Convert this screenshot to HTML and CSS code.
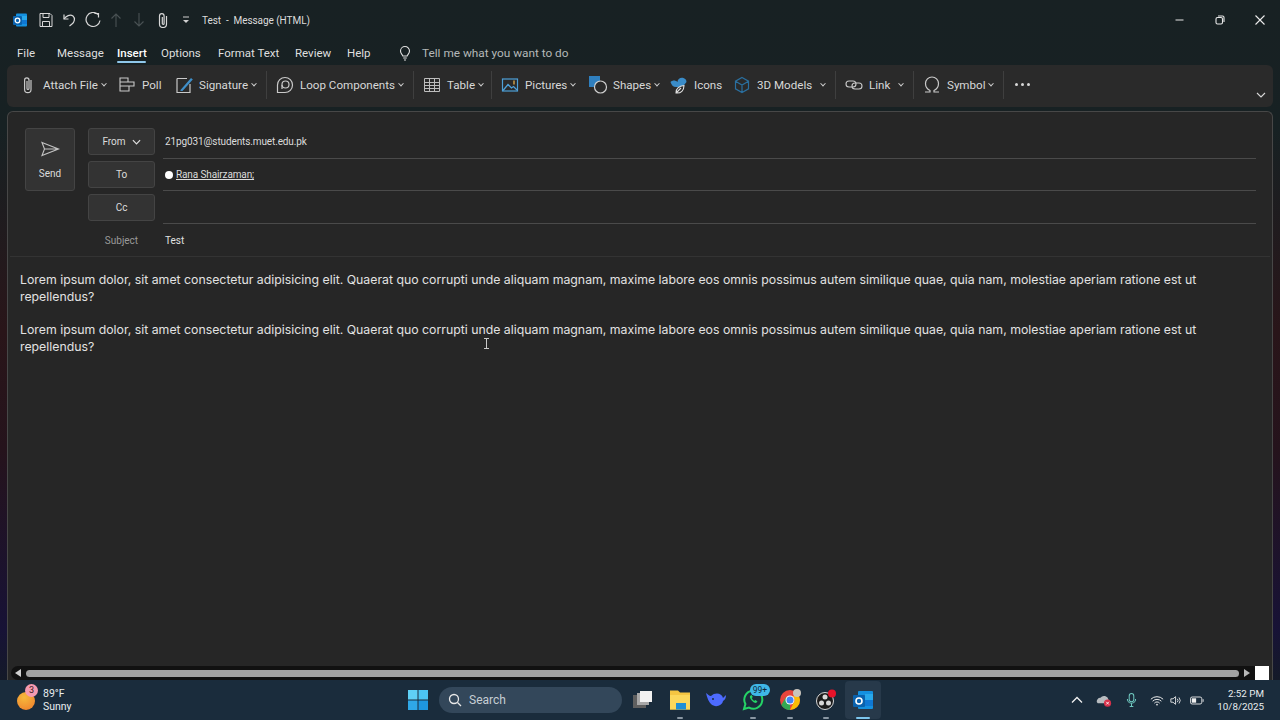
FILE: index.html
```html
<!DOCTYPE html>
<html lang="en">
<head>
<meta charset="utf-8">
<title>Test - Message (HTML)</title>
<link rel="stylesheet" href="styles.css">
</head>
<body>
<div class="window">
  <header class="titlebar">
    <svg class="qa outlook" viewBox="0 0 16 16"><rect x="4" y="1.500" width="11" height="13" rx="1" fill="#1490df"/><rect x="9" y="4" width="6" height="4" fill="#28a8ea"/><rect x="9" y="8" width="6" height="4" fill="#0f78d4"/><rect x="1" y="4" width="9" height="9" rx="1" fill="#0a62ad"/><circle cx="5.500" cy="8.500" r="2.300" fill="none" stroke="#fff" stroke-width="1.300"/></svg>
    <svg class="qa save" viewBox="0 0 16 16" fill="none" stroke="#d8d8d8"><path d="M2 1.500h10l2 2v11H2z"/><path d="M5 1.500v4h6v-4M4.500 14.500v-5h7v5"/></svg>
    <svg class="qa undo" viewBox="0 0 16 16" fill="none" stroke="#d8d8d8" stroke-width="1.200"><path d="M3 2.500v4.500h4.500"/><path d="M3 7c2-3 6-5 9-3 2.500 2.300 1.500 6-1 8l-2.500 2"/></svg>
    <svg class="qa redo" viewBox="0 0 16 16" fill="none" stroke="#d8d8d8" stroke-width="1.200"><path d="M9.500 1.500h4v4"/><path d="M13 2.500A7 7 0 1 0 15 8.500"/></svg>
    <svg class="qa up" viewBox="0 0 16 16" fill="none" stroke="#4a5254" stroke-width="1.100"><path d="M8 15V2M3.500 6.500 8 2l4.500 4.500"/></svg>
    <svg class="qa down" viewBox="0 0 16 16" fill="none" stroke="#4a5254" stroke-width="1.100"><path d="M8 1v13M3.500 9.500 8 14l4.500-4.500"/></svg>
    <svg class="qa clip" viewBox="0 0 16 16" fill="none" stroke="#d8d8d8" stroke-width="1.200"><path d="M11.500 4v8a3.500 3.500 0 0 1-7 0V4a2.300 2.300 0 0 1 4.600 0v7.500a.9.9 0 0 1-1.800 0V5"/></svg>
    <svg class="qa more" viewBox="0 0 16 16" fill="#d0d0d0"><rect x="5" y="4.500" width="6" height="1"/><path d="M5 8h6l-3 3z"/></svg>
    <span class="doc-title">Test&nbsp; -&nbsp; Message (HTML)</span>
    <div class="winctl">
      <svg viewBox="0 0 12 12" stroke="#e8e8e8" fill="none"><path d="M1.500 6h8"/></svg>
      <svg viewBox="0 0 12 12" stroke="#e8e8e8" fill="none" stroke-width="1.100"><rect x="2" y="3.500" width="6.500" height="6.500" rx="1.500"/><path d="M4 2h4.500A1.500 1.500 0 0 1 10 3.500V8"/></svg>
      <svg viewBox="0 0 12 12" stroke="#ececec" fill="none" stroke-width="1.100"><path d="m1.500 1.500 9 9m0-9-9 9"/></svg>
    </div>
  </header>

  <nav class="tabs">
    <span class="tab t-file">File</span>
    <span class="tab t-msg">Message</span>
    <span class="tab t-ins active">Insert</span>
    <span class="tab t-opt">Options</span>
    <span class="tab t-fmt">Format Text</span>
    <span class="tab t-rev">Review</span>
    <span class="tab t-help">Help</span>
    <svg class="bulb" viewBox="0 0 16 16" fill="none" stroke="#e0e0e0" stroke-width="1.100"><path d="M5.800 11C5.500 9.500 3.500 8.500 3.500 6a4.500 4.500 0 0 1 9 0c0 2.500-2 3.500-2.300 5z"/><path d="M6.200 13h3.600M7 15h2"/></svg>
    <span class="tell">Tell me what you want to do</span>
  </nav>

  <section class="ribbon">
    <div class="rb w-attach"><svg class="ri" viewBox="0 0 20 20" fill="none" stroke="#c9c9c9" stroke-width="1.200"><path d="M13 5v9.500a3.200 3.200 0 0 1-6.400 0V5a2.200 2.200 0 0 1 4.400 0v8.500a1 1 0 0 1-2 0V6"/></svg><span>Attach File</span><i class="caret"></i></div>
    <div class="rb w-poll"><svg class="ri" viewBox="0 0 20 20" fill="none" stroke="#c9c9c9" stroke-width="1.100"><path d="M3 3h8v4H3zM3 7h14v4H3zM3 11h9v5H3z"/></svg><span>Poll</span></div>
    <div class="rb w-sign"><svg class="ri" viewBox="0 0 20 20" fill="none"><path d="M3 3.500h10M3 3.500v14h13V9" stroke="#c9c9c9" stroke-width="1.200"/><path d="M6.500 15 17 3l1.800 1.500L8.500 16H6.500z" fill="#3f8fc9"/></svg><span>Signature</span><i class="caret"></i></div>
    <b class="sep"></b>
    <div class="rb w-loop"><svg class="ri" viewBox="0 0 20 20" fill="none" stroke="#c9c9c9" stroke-width="1.200"><path d="M2.500 10a7.500 7.500 0 1 1 7.500 7.500H2.500z"/><circle cx="10.500" cy="9.500" r="3.500"/><path d="M7 10v4"/></svg><span>Loop Components</span><i class="caret"></i></div>
    <b class="sep"></b>
    <div class="rb w-table"><svg class="ri" viewBox="0 0 20 20" fill="none" stroke="#bdbdbd" stroke-width="1"><path d="M2.500 3.500h15v13h-15zM2.500 7.500h15M2.500 10.500h15M2.500 13.500h15M7.500 3.500v13M12.500 3.500v13"/></svg><span>Table</span><i class="caret"></i></div>
    <b class="sep"></b>
    <div class="rb w-pic"><svg class="ri" viewBox="0 0 20 20" fill="none"><rect x="2.500" y="4" width="15" height="12" stroke="#4ea0d8" stroke-width="1.200"/><path d="M3 15.500 8 9.500l3.500 3.500 2-1.500 3.500 3.500" stroke="#4ea0d8" stroke-width="1.300"/><path d="M14 5.500v4" stroke="#d6a64a" stroke-width="1.400"/></svg><span>Pictures</span><i class="caret"></i></div>
    <div class="rb w-shape"><svg class="ri" viewBox="0 0 20 20" fill="none"><rect x="1" y="1" width="11" height="11" fill="#2f7fbe"/><circle cx="12.500" cy="12" r="6" fill="#2a2a2a" stroke="#d0d0d0" stroke-width="1.200"/></svg><span>Shapes</span><i class="caret"></i></div>
    <div class="rb w-icons"><svg class="ri" viewBox="0 0 20 20" fill="none"><path d="M1.500 7c2-2 5-2 7 0 0-3 3-5 6-4 2 .7 3 2 3 4l-4 5H7C4 12 2.500 10 1.500 7z" fill="#3a8cc8"/><path d="M7 18c-.5-4 3-7 8-7.500 0 5-3 8-8 7.500zm0 0 5-5" stroke="#e0e0e0" stroke-width="1.100" fill="#2a2a2a"/></svg><span>Icons</span></div>
    <div class="rb w-3d"><svg class="ri" viewBox="0 0 20 20" fill="none" stroke="#2a6f9f" stroke-width="1.200"><path d="m10 2.500 6.500 3.700v7.600L10 17.500l-6.500-3.700V6.200zM3.500 6.200 10 10l6.500-3.800M10 10v7.500"/></svg><span>3D Models</span><i class="caret"></i></div>
    <b class="sep"></b>
    <div class="rb w-link"><svg class="ri" viewBox="0 0 20 20" fill="none" stroke="#c9c9c9" stroke-width="1.100"><rect x="2" y="6" width="10" height="6" rx="3"/><rect x="8" y="8" width="10" height="6" rx="3"/></svg><span>Link</span><i class="caret"></i></div>
    <b class="sep"></b>
    <div class="rb w-sym"><svg class="ri" viewBox="0 0 20 20" fill="none" stroke="#c9c9c9" stroke-width="1.200"><path d="M3 17h5v-1.500C5 14 3.500 11.500 3.500 8.500a6.500 6.500 0 0 1 13 0c0 3-1.500 5.500-4.500 7V17h5"/></svg><span>Symbol</span><i class="caret"></i></div>
    <b class="sep"></b>
    <div class="dots"><i></i><i></i><i></i></div>
    <svg class="collapse" viewBox="0 0 10 6" fill="none" stroke="#d8d8d8" stroke-width="1.100"><path d="m1 1 4 4 4-4"/></svg>
  </section>

  <main class="compose">
    <div class="head">
      <div class="send"><svg viewBox="0 0 20 16" fill="none" stroke="#c4c4c4" stroke-width="1.100"><path d="M2 1.500 18.500 8 2 14.500 4.500 8zM4.500 8h14"/></svg><span>Send</span></div>
      <div class="fields">
        <div class="row r-from"><div class="btn">From <svg class="from-car" viewBox="0 0 10 6" fill="none" stroke="#e0e0e0" stroke-width="1.300"><path d="m1 1 4 4 4-4"/></svg></div><div class="val">21pg031@students.muet.edu.pk</div></div>
        <div class="row r-to"><div class="btn">To</div><div class="val"><i class="dot"></i><u>Rana Shairzaman;</u></div></div>
        <div class="row r-cc"><div class="btn">Cc</div><div class="val"></div></div>
        <div class="row r-sub"><div class="lbl">Subject</div><div class="subject">Test</div></div>
      </div>
    </div>
    <article class="body">
      <p>Lorem ipsum dolor, sit amet consectetur adipisicing elit. Quaerat quo corrupti unde aliquam magnam, maxime labore eos omnis possimus autem similique quae, quia nam, molestiae aperiam ratione est ut repellendus?</p>
      <p>Lorem ipsum dolor, sit amet consectetur adipisicing elit. Quaerat quo corrupti unde aliquam magnam, maxime labore eos omnis possimus autem similique quae, quia nam, molestiae aperiam ratione est ut repellendus?</p>
    </article>
    <svg class="ibeam" viewBox="0 0 7 11" fill="none" stroke="#c8c8c8"><path d="M1 .5h5M3.500.5v10M1 10.500h5"/></svg>
    <div class="hscroll">
      <i class="arrow left"></i>
      <div class="thumb"></div>
      <i class="arrow right"></i>
      <div class="corner"></div>
    </div>
  </main>
</div>

<footer class="taskbar">
  <div class="weather">
    <div class="sun"><span class="badge">3</span></div>
    <div class="wtext"><span>89°F</span><span>Sunny</span></div>
  </div>
  <svg class="start" viewBox="0 0 20 20"><rect width="9.500" height="9.500" fill="#5fd0f5"/><rect x="10.500" width="9.500" height="9.500" fill="#4cc4f2"/><rect y="10.500" width="9.500" height="9.500" fill="#2fa8e8"/><rect x="10.500" y="10.500" width="9.500" height="9.500" fill="#1e96e0"/></svg>
  <div class="search"><svg viewBox="0 0 14 14" fill="none" stroke="#e8e8e8" stroke-width="1.300"><circle cx="6" cy="6" r="4.500"/><path d="m9.500 9.500 3.500 3.500"/></svg><span>Search</span></div>
  <div class="apps">
    <div class="app"><svg viewBox="0 0 22 22"><rect x="1" y="6" width="13" height="13" fill="#5f5f5f"/><rect x="5" y="4" width="12" height="12" fill="#a8a8a8"/><rect x="8" y="2" width="12" height="11" fill="#f2f2f2"/></svg></div>
    <div class="app on"><svg viewBox="0 0 22 22"><path d="M1 1.500h8l2 2h10v17H1z" fill="#f4c542"/><rect x="1" y="6" width="20" height="14.500" fill="#fbd75b"/><rect x="7" y="14" width="10" height="6.500" fill="#1f8fd6"/></svg></div>
    <div class="app"><svg viewBox="0 0 22 22"><path d="M1 4c2 1 3 3 5 3 4-4 11-3 12 2l3-3c0 3-1 5-3 6-1 5-8 7-12 3-2-2-4-6-5-11z" fill="#4d6bfe"/><circle cx="8" cy="10" r="1" fill="#1a2c3c"/></svg></div>
    <div class="app on wa"><svg viewBox="0 0 22 22" fill="none"><path d="M2 20l1.400-5A9 9 0 1 1 7 18.600z" stroke="#25d366" stroke-width="2"/><path d="M8 7c-1 2 3 7 6 7l1.500-1.500-2-1.500-1 .8C11.500 11.500 10 10 9.800 9l1-1-1.200-2z" fill="#25d366"/></svg><span class="count">99+</span></div>
    <div class="app on"><svg viewBox="0 0 22 22"><circle cx="11" cy="11" r="10" fill="#e8453c"/><path d="M11 21A10 10 0 0 1 2.300 16L7 8l4 3z" fill="#34a853"/><path d="M21 11a10 10 0 0 1-10 10l5-10-2-4h6z" fill="#fbbc05"/><circle cx="11" cy="11" r="4.500" fill="#fff"/><circle cx="11" cy="11" r="3.500" fill="#4285f4"/><circle cx="18" cy="4" r="4" fill="#c9c4bc"/></svg></div>
    <div class="app on"><svg viewBox="0 0 22 22"><circle cx="10" cy="12" r="8.500" fill="#1c1c1c" stroke="#d8d8d8"/><circle cx="10" cy="8" r="2.500" fill="#d8d8d8"/><circle cx="6.500" cy="14" r="2.500" fill="#d8d8d8"/><circle cx="13.500" cy="14" r="2.500" fill="#d8d8d8"/><circle cx="17" cy="4.500" r="4" fill="#e8132a"/></svg></div>
    <div class="app on cur"><svg viewBox="0 0 22 22"><rect x="6" y="2" width="15" height="18" rx="1" fill="#1490df"/><rect x="13" y="5" width="8" height="6" fill="#28a8ea"/><rect x="13" y="11" width="8" height="6" fill="#0f78d4"/><rect x="1" y="6" width="12" height="12" rx="1" fill="#0a62ad"/><circle cx="7" cy="12" r="3" fill="none" stroke="#fff" stroke-width="1.600"/></svg></div>
  </div>
  <div class="tray">
    <svg class="t-chev" viewBox="0 0 12 8" fill="none" stroke="#f0f0f0" stroke-width="1.300"><path d="m1 6.500 5-5 5 5"/></svg>
    <svg class="t-cloud" viewBox="0 0 18 14"><path d="M1 9a4 4 0 0 1 4-5 5 5 0 0 1 9 2v4H2z" fill="#b8bcc0"/><circle cx="13" cy="10" r="4" fill="#d8304a"/><path d="m11.500 8.500 3 3m0-3-3 3" stroke="#fff"/></svg>
    <svg class="t-mic" viewBox="0 0 12 16" fill="none" stroke="#6fc9c0" stroke-width="1.100"><rect x="3.500" y="1" width="5" height="9" rx="2.500"/><path d="M1.500 7a4.500 4.500 0 0 0 9 0M6 11.500V15M4 15h4"/></svg>
    <svg class="t-wifi" viewBox="0 0 16 12" fill="none" stroke="#f0f0f0" stroke-width="1.100"><path d="M1 4.500a10 10 0 0 1 14 0M3 6.800a7 7 0 0 1 10 0M5 9a4 4 0 0 1 6 0"/><circle cx="8" cy="10.800" r=".6"/></svg>
    <svg class="t-vol" viewBox="0 0 14 12" fill="none" stroke="#f0f0f0"><path d="M1 4h2.500L6.500 1.500v9L3.500 8H1zM8.500 4a3 3 0 0 1 0 4M10.500 2.500a5.500 5.500 0 0 1 0 7"/></svg>
    <svg class="t-bat" viewBox="0 0 16 10" fill="none" stroke="#f0f0f0"><rect x=".5" y="1" width="13" height="8" rx="2"/><rect x="2" y="2.500" width="5" height="5" fill="#f0f0f0" stroke="none"/><path d="M15 3.500v3"/></svg>
    <div class="clock"><span>2:52 PM</span><span>10/8/2025</span></div>
  </div>
</footer>
</body>
</html>
```
FILE: styles.css
```css
* { box-sizing: border-box; }
html, body { margin: 0; height: 100%; }
body {
  width: 1280px; height: 720px; overflow: hidden;
  background: #182123; color: #e4e4e4;
  font-family: "Roboto", "Noto Sans", sans-serif;
  font-size: 12px; display: flex; flex-direction: column;
}
.window {
  height: 680px; display: flex; flex-direction: column;
  background: linear-gradient(180deg, #182123 0, #172123 130px, #291519 330px, #25131c 450px, #171236 630px, #141a28 680px);
}

.titlebar { height: 40px; display: flex; align-items: center; padding-left: 12px; flex: none; }
.qa { width: 16px; height: 16px; flex: none; }
.save { margin-left: 10px; }
.undo, .up, .down, .more { margin-left: 7px; }
.redo, .clip { margin-left: 8px; }
.doc-title { margin-left: 8px; font-size: 10px; letter-spacing: -.05px; color: #dcdcdc; }
.winctl { margin-left: auto; display: flex; gap: 28px; padding-right: 14px; }
.winctl svg { width: 12px; height: 12px; }

.tabs { height: 25px; display: flex; align-items: center; padding-left: 17px; font-size: 11.500px; color: #dfdfdf; flex: none; }
.tab { flex: none; line-height: 20px; position: relative; }
.t-file { width: 40px; }
.t-msg { width: 60px; }
.t-ins { width: 44px; }
.t-opt { width: 57px; }
.t-fmt { width: 77px; }
.t-rev { width: 52px; }
.t-help { width: 50px; }
.active { color: #fff; font-weight: 500; }
.active::after { content: ""; position: absolute; left: 0; width: 29px; bottom: 0; height: 2px; background: #8fc7ea; border-radius: 1px; }
.bulb { width: 16px; height: 16px; flex: none; }
.tell { margin-left: 9px; font-size: 11.800px; color: #b4b8b8; }

.ribbon {
  height: 42px; margin: 0 7px; background: #2a2a2a; border-radius: 6px;
  display: flex; align-items: center; position: relative; padding: 0 0 2px 11px;
  font-size: 11.600px; color: #d8d8d8; flex: none;
}
.rb { display: flex; align-items: center; flex: none; height: 24px; white-space: nowrap; }
.ri { width: 20px; height: 20px; flex: none; margin-right: 5px; }
.caret { width: 4px; height: 4px; margin-left: 4px; border-right: 1px solid #d0d0d0; border-bottom: 1px solid #d0d0d0; transform: rotate(45deg) translate(-1px, -1px); flex: none; }
.sep { width: 1px; height: 28px; background: #3f3f3f; flex: none; margin-right: 8px; }
.w-attach { width: 99px; }
.w-poll { width: 57px; }
.w-sign { width: 92px; }
.w-loop { width: 138px; }
.w-table { width: 69px; }
.w-pic { width: 88px; }
.w-shape { width: 81px; }
.w-icons { width: 63px; }
.w-3d { width: 103px; }
.w-link { width: 69px; }
.w-sym { width: 81px; }
.w-3d .caret, .w-link .caret { margin-left: 9px; }
.dots { display: flex; gap: 3px; margin-left: 3px; margin-bottom: 2px; }
.dots i { width: 3px; height: 3px; background: #d8d8d8; border-radius: 50%; }
.collapse { position: absolute; right: 7px; bottom: 9px; width: 10px; height: 6px; }

.compose {
  flex: 1; margin: 4px 7px 0; background: #262626; border: 1px solid #474747; border-bottom: 0;
  border-radius: 6px 6px 0 0; position: relative; min-height: 0; display: flex; flex-direction: column;
}
.head { display: flex; padding: 16px 16px 0 17px; flex: none; }
.send {
  width: 50px; height: 63px; background: #333; border: 1px solid #444; border-radius: 3px;
  display: flex; flex-direction: column; align-items: center; font-size: 10px; color: #dcdcdc; flex: none;
}
.send svg { width: 20px; height: 16px; margin-top: 12px; margin-bottom: 11px; }
.fields { flex: 1; margin-left: 13px; }
.row { display: flex; height: 27px; }
.btn {
  width: 67px; height: 27px; background: #333; border: 1px solid #444; border-radius: 3px; flex: none;
  display: flex; align-items: center; justify-content: center; gap: 6px; font-size: 10px; color: #dcdcdc;
}
.from-car { width: 9px; height: 6px; }
.val { flex: 1; margin-left: 8px; height: 30px; border-bottom: 1px solid #4a4a4a; font-size: 10px; letter-spacing: -.12px; color: #dcdcdc; display: flex; align-items: flex-start; padding: 7px 0 0 2px; line-height: 14px; }
.r-from .val { height: 31px; }
.r-to, .r-cc { margin-top: 6px; }
.dot { width: 8px; height: 8px; background: #fff; border-radius: 50%; margin: 3px 3px 0 0; flex: none; }
.r-sub { align-items: center; margin-top: 12px; height: 14px; }
.lbl { width: 67px; text-align: center; font-size: 10px; color: #9a9a9a; flex: none; }
.subject { margin-left: 10px; font-size: 10px; color: #e0e0e0; }
.body {
  flex: 1; margin: 9px 2px 0; border-top: 1px solid #333; padding: 14px 50px 0 10px;
  font-family: "Inter", "Liberation Sans", sans-serif; font-size: 12.300px; line-height: 17px; color: #e2e2e2;
}
.body p { margin: 0 0 16px; }
.ibeam { position: absolute; left: 475px; top: 226px; width: 7px; height: 11px; }

.hscroll { height: 14px; display: flex; align-items: center; background: #111; margin: 0 3px; flex: none; border-radius: 7px 0 0 7px; }
.arrow { width: 0; height: 0; border-top: 4px solid transparent; border-bottom: 4px solid transparent; flex: none; }
.arrow.left { border-right: 6px solid #d0d0d0; margin-left: 4px; }
.arrow.right { border-left: 6px solid #b8b8b8; margin-left: 5px; }
.thumb { flex: 1; height: 7px; margin-left: 5px; background: #a2a2a2; border-radius: 4px; }
.corner { width: 14px; height: 14px; margin-left: 5px; background: #fff; flex: none; }

.taskbar { height: 40px; background: #1a2c3c; display: flex; align-items: center; flex: none; font-size: 10.500px; color: #e8ecef; }
.weather { display: flex; align-items: center; margin-left: 17px; width: 381px; flex: none; }
.sun { width: 18px; height: 18px; border-radius: 50%; background: radial-gradient(circle at 40% 30%, #f6b93b, #ee7b2c); position: relative; margin-top: 2px; }
.badge { position: absolute; left: 8px; top: -8px; width: 13px; height: 13px; border-radius: 50%; background: #f59ab0; color: #3a1a22; font-size: 9px; line-height: 13px; text-align: center; }
.wtext { display: flex; flex-direction: column; margin-left: 8px; line-height: 13px; }
.start { width: 20px; height: 20px; flex: none; margin-left: 10px; }
.search { width: 183px; height: 26px; margin-left: 11px; background: #33475a; border-radius: 13px; display: flex; align-items: center; padding-left: 9px; font-size: 12px; color: #c6ced4; flex: none; }
.search svg { width: 14px; height: 14px; margin-right: 7px; }
.apps { display: flex; margin-left: 2.670px; }
.app { width: 36.670px; height: 38px; display: flex; align-items: center; justify-content: center; position: relative; flex: none; }
.app svg { width: 22px; height: 22px; }
.app.on::after { content: ""; position: absolute; bottom: 0; left: 50%; width: 6px; height: 2px; margin-left: -3px; background: #8a97a3; border-radius: 1px; }
.app.cur { background: #27394a; border-radius: 4px; }
.app.cur::after { width: 14px; margin-left: -7px; background: #7cc6ee; }
.count { position: absolute; left: 15px; top: 3px; background: #3fb7e8; color: #10283a; font-size: 8.500px; line-height: 12px; padding: 0 3px; border-radius: 6px; }
.tray { margin-left: auto; display: flex; align-items: center; padding-right: 16px; }
.tray svg { flex: none; }
.t-chev { width: 12px; height: 8px; }
.t-cloud { width: 16px; height: 13px; margin-left: 13px; }
.t-mic { width: 11px; height: 16px; margin-left: 13.500px; }
.t-wifi { width: 14px; height: 11px; margin-left: 13.500px; }
.t-vol { width: 12px; height: 11px; margin-left: 6px; }
.t-bat { width: 14px; height: 9px; margin-left: 8px; }
.clock { display: flex; flex-direction: column; align-items: flex-end; width: 47px; margin-left: 13px; line-height: 13px; font-size: 9.800px; }
```
